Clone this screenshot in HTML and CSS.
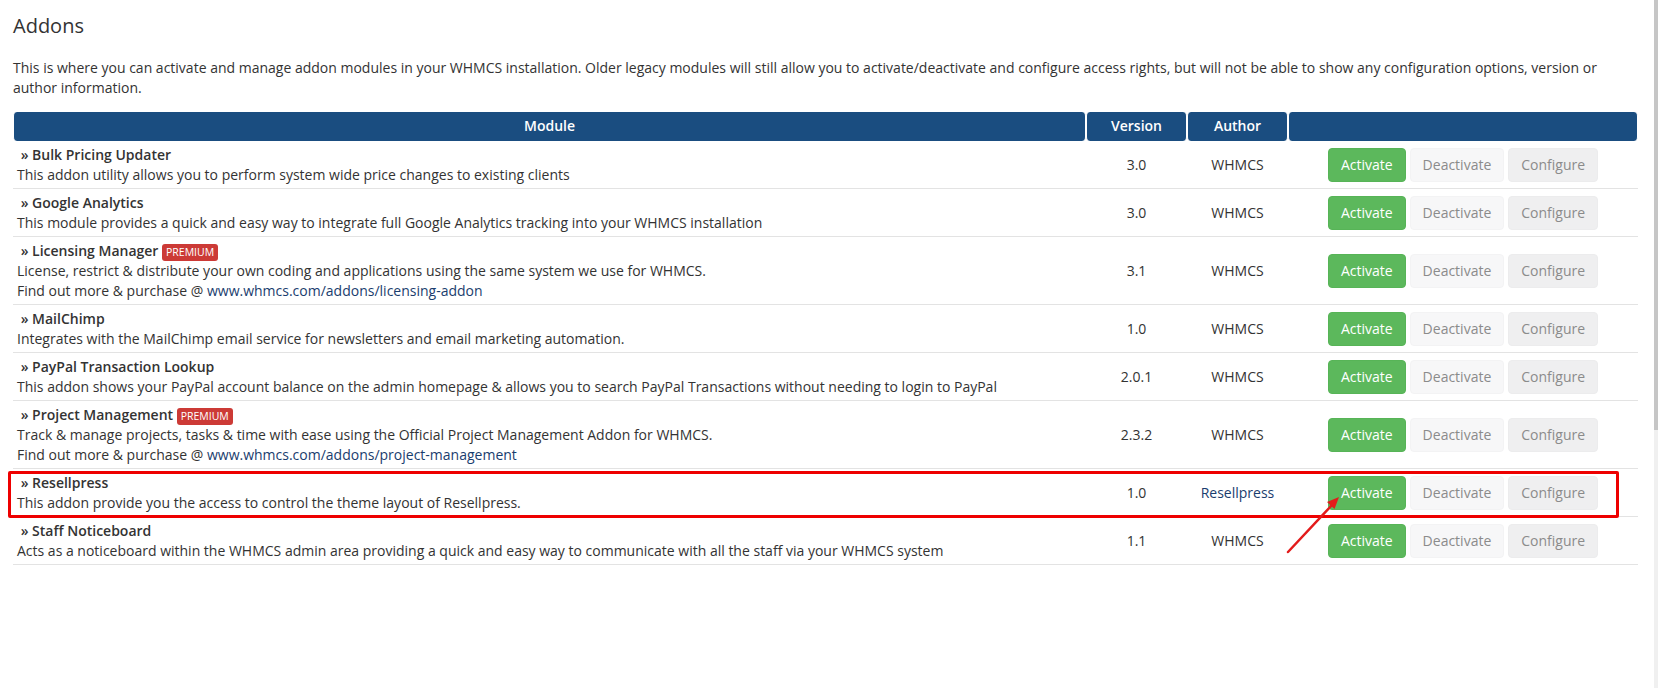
FILE: index.html
```html
<!DOCTYPE html>
<html lang="en">
<head>
<meta charset="utf-8">
<title>Addons</title>
<link rel="stylesheet" href="styles.css">
</head>
<body>
<div class="page">
  <main class="content">
    <h1 class="title">Addons</h1>
    <p class="intro">This is where you can activate and manage addon modules in your WHMCS installation. Older legacy modules will still allow you to activate/deactivate and configure access rights, but will not be able to show any configuration options, version or author information.</p>
    <table class="addons">
      <colgroup>
        <col class="c-module"><col class="c-version"><col class="c-author"><col class="c-actions">
      </colgroup>
      <thead>
        <tr><th>Module</th><th>Version</th><th>Author</th><th></th></tr>
      </thead>
      <tbody>
        <tr>
          <td class="module"><strong>&nbsp;» Bulk Pricing Updater</strong><br>This addon utility allows you to perform system wide price changes to existing clients</td>
          <td class="center">3.0</td><td class="center">WHMCS</td>
          <td><div class="actions"><span class="btn btn-activate">Activate</span><span class="btn btn-deactivate">Deactivate</span><span class="btn btn-configure">Configure</span></div></td>
        </tr>
        <tr>
          <td class="module"><strong>&nbsp;» Google Analytics</strong><br>This module provides a quick and easy way to integrate full Google Analytics tracking into your WHMCS installation</td>
          <td class="center">3.0</td><td class="center">WHMCS</td>
          <td><div class="actions"><span class="btn btn-activate">Activate</span><span class="btn btn-deactivate">Deactivate</span><span class="btn btn-configure">Configure</span></div></td>
        </tr>
        <tr>
          <td class="module"><strong>&nbsp;» Licensing Manager</strong> <span class="badge">PREMIUM</span><br>License, restrict &amp; distribute your own coding and applications using the same system we use for WHMCS.<br>Find out more &amp; purchase @ <a class="link" href="#">www.whmcs.com/addons/licensing-addon</a></td>
          <td class="center">3.1</td><td class="center">WHMCS</td>
          <td><div class="actions"><span class="btn btn-activate">Activate</span><span class="btn btn-deactivate">Deactivate</span><span class="btn btn-configure">Configure</span></div></td>
        </tr>
        <tr>
          <td class="module"><strong>&nbsp;» MailChimp</strong><br>Integrates with the MailChimp email service for newsletters and email marketing automation.</td>
          <td class="center">1.0</td><td class="center">WHMCS</td>
          <td><div class="actions"><span class="btn btn-activate">Activate</span><span class="btn btn-deactivate">Deactivate</span><span class="btn btn-configure">Configure</span></div></td>
        </tr>
        <tr>
          <td class="module"><strong>&nbsp;» PayPal Transaction Lookup</strong><br>This addon shows your PayPal account balance on the admin homepage &amp; allows you to search PayPal Transactions without needing to login to PayPal</td>
          <td class="center">2.0.1</td><td class="center">WHMCS</td>
          <td><div class="actions"><span class="btn btn-activate">Activate</span><span class="btn btn-deactivate">Deactivate</span><span class="btn btn-configure">Configure</span></div></td>
        </tr>
        <tr>
          <td class="module"><strong>&nbsp;» Project Management</strong> <span class="badge">PREMIUM</span><br>Track &amp; manage projects, tasks &amp; time with ease using the Official Project Management Addon for WHMCS.<br>Find out more &amp; purchase @ <a class="link" href="#">www.whmcs.com/addons/project-management</a></td>
          <td class="center">2.3.2</td><td class="center">WHMCS</td>
          <td><div class="actions"><span class="btn btn-activate">Activate</span><span class="btn btn-deactivate">Deactivate</span><span class="btn btn-configure">Configure</span></div></td>
        </tr>
        <tr>
          <td class="module"><strong>&nbsp;» Resellpress</strong><br>This addon provide you the access to control the theme layout of Resellpress.</td>
          <td class="center">1.0</td><td class="center"><a class="link" href="#">Resellpress</a></td>
          <td><div class="actions"><span class="btn btn-activate">Activate</span><span class="btn btn-deactivate">Deactivate</span><span class="btn btn-configure">Configure</span></div></td>
        </tr>
        <tr>
          <td class="module"><strong>&nbsp;» Staff Noticeboard</strong><br>Acts as a noticeboard within the WHMCS admin area providing a quick and easy way to communicate with all the staff via your WHMCS system</td>
          <td class="center">1.1</td><td class="center">WHMCS</td>
          <td><div class="actions"><span class="btn btn-activate">Activate</span><span class="btn btn-deactivate">Deactivate</span><span class="btn btn-configure">Configure</span></div></td>
        </tr>
      </tbody>
    </table>
  </main>
  <div class="scrollbar"><div class="thumb"></div></div>

  <div class="highlight"></div>
  <svg class="arrow" width="1658" height="688" viewBox="0 0 1658 688">
    <line x1="1288" y1="552" x2="1332" y2="505" stroke="#e31b1b" stroke-width="2.5" stroke-linecap="round"/>
    <polygon points="1339,497 1334.5,509 1327,502" fill="#e31b1b"/>
  </svg>
</div>
</body>
</html>
```

FILE: styles.css
```css
html, body {
  margin: 0;
  padding: 0;
  background: #fff;
}

body {
  font-family: "Open Sans", "Liberation Sans", sans-serif;
  font-size: 14px;
  line-height: 20px;
  color: #333;
}

.page {
  position: relative;
  display: flex;
  width: 1658px;
  height: 688px;
  overflow: hidden;
}

.content {
  flex: 1;
  padding: 0 16px 0 13px;
}

.title {
  margin: 15px 0 0;
  font-size: 20px;
  line-height: 22px;
  font-weight: 400;
  color: #333;
}

.intro {
  margin: 21px 0 14px;
}

.addons {
  width: 1625px;
  table-layout: fixed;
  border-collapse: separate;
  border-spacing: 0;
}

.c-module { width: 1073px; }
.c-version { width: 101px; }
.c-author { width: 101px; }
.c-actions { width: 350px; }

.addons th {
  background: #1a4d80;
  color: #fff;
  font-weight: 600;
  text-align: center;
  padding: 4px 3px 5px;
  border-left: 1px solid #fff;
  border-right: 1px solid #fff;
  border-radius: 4px;
}

.addons td {
  padding: 4px 3px 3px;
  border-bottom: 1px solid #e3e3e3;
  vertical-align: middle;
}

.addons td.module {
  vertical-align: top;
  padding-left: 4px;
}

.addons td.center {
  text-align: center;
}

.addons strong {
  font-weight: 600;
  color: #333;
}

.link {
  color: #1a3d6e;
  text-decoration: none;
}

.badge {
  display: inline-block;
  background: #cc3a36;
  color: #fff;
  font-size: 10.5px;
  line-height: 17px;
  padding: 0 4px;
  border-radius: 3px;
  vertical-align: 0;
}

.actions {
  display: flex;
  justify-content: center;
  gap: 4px;
}

.btn {
  display: inline-block;
  padding: 6px 12px;
  font-size: 14px;
  line-height: 20px;
  border: 1px solid transparent;
  border-radius: 4px;
  white-space: nowrap;
}

.btn-activate {
  background: #5cb85c;
  border-color: #57b457;
  color: #fff;
}

.btn-deactivate {
  background: #f7f7f8;
  border-color: #f3f3f4;
  color: #8b8b8b;
}

.btn-configure {
  background: #efeff0;
  border-color: #ececed;
  color: #8b8b8b;
}

.scrollbar {
  width: 4px;
  background: #f0f0f0;
}

.thumb {
  height: 430px;
  background: #c6c6c6;
}

.highlight {
  position: absolute;
  left: 8px;
  top: 471px;
  width: 1605px;
  height: 41px;
  border: 3px solid #e00;
  border-radius: 2px;
}

.arrow {
  position: absolute;
  left: 0;
  top: 0;
  pointer-events: none;
}
```
